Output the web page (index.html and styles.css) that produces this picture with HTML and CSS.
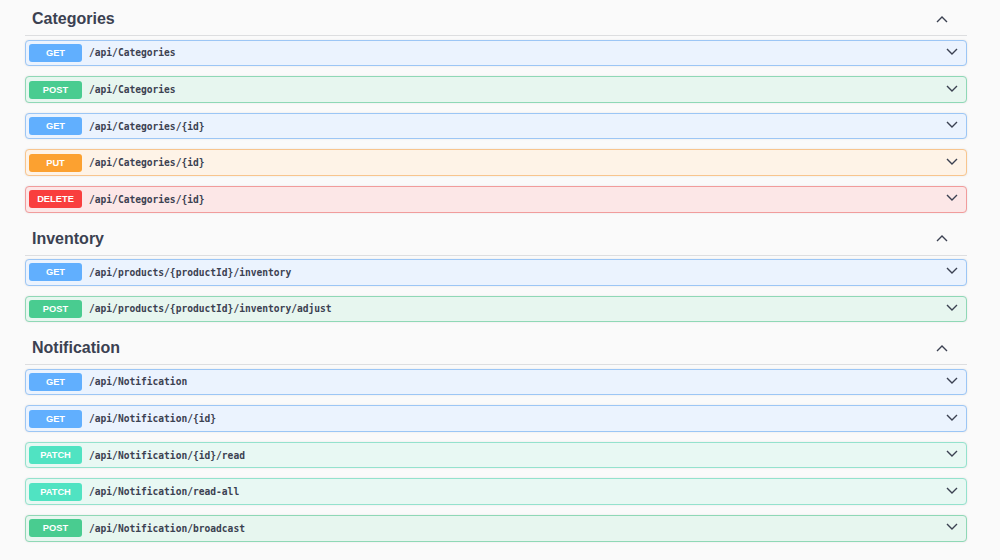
FILE: index.html
```html
<html>

<head>
  <title>API</title>

  <link rel="stylesheet" href="styles.css">
</head>

<body>
  <div class="wrapper">

    <div class="tag">
      <div class="tag-title">
        <span>Categories</span>
        <svg class="arrow" width="12" height="7" viewBox="0 0 12 7"><polyline points="1,6 6,1 11,6"></polyline></svg>
      </div>
      <div class="op get">
        <span class="method">GET</span>
        <span class="path">/api/Categories</span>
        <svg class="arrow down" width="12" height="7" viewBox="0 0 12 7"><polyline points="1,1 6,6 11,1"></polyline></svg>
      </div>
      <div class="op post">
        <span class="method">POST</span>
        <span class="path">/api/Categories</span>
        <svg class="arrow down" width="12" height="7" viewBox="0 0 12 7"><polyline points="1,1 6,6 11,1"></polyline></svg>
      </div>
      <div class="op get">
        <span class="method">GET</span>
        <span class="path">/api/Categories/{id}</span>
        <svg class="arrow down" width="12" height="7" viewBox="0 0 12 7"><polyline points="1,1 6,6 11,1"></polyline></svg>
      </div>
      <div class="op put">
        <span class="method">PUT</span>
        <span class="path">/api/Categories/{id}</span>
        <svg class="arrow down" width="12" height="7" viewBox="0 0 12 7"><polyline points="1,1 6,6 11,1"></polyline></svg>
      </div>
      <div class="op delete">
        <span class="method">DELETE</span>
        <span class="path">/api/Categories/{id}</span>
        <svg class="arrow down" width="12" height="7" viewBox="0 0 12 7"><polyline points="1,1 6,6 11,1"></polyline></svg>
      </div>
    </div>

    <div class="tag">
      <div class="tag-title">
        <span>Inventory</span>
        <svg class="arrow" width="12" height="7" viewBox="0 0 12 7"><polyline points="1,6 6,1 11,6"></polyline></svg>
      </div>
      <div class="op get">
        <span class="method">GET</span>
        <span class="path">/api/products/{productId}/inventory</span>
        <svg class="arrow down" width="12" height="7" viewBox="0 0 12 7"><polyline points="1,1 6,6 11,1"></polyline></svg>
      </div>
      <div class="op post">
        <span class="method">POST</span>
        <span class="path">/api/products/{productId}/inventory/adjust</span>
        <svg class="arrow down" width="12" height="7" viewBox="0 0 12 7"><polyline points="1,1 6,6 11,1"></polyline></svg>
      </div>
    </div>

    <div class="tag">
      <div class="tag-title">
        <span>Notification</span>
        <svg class="arrow" width="12" height="7" viewBox="0 0 12 7"><polyline points="1,6 6,1 11,6"></polyline></svg>
      </div>
      <div class="op get">
        <span class="method">GET</span>
        <span class="path">/api/Notification</span>
        <svg class="arrow down" width="12" height="7" viewBox="0 0 12 7"><polyline points="1,1 6,6 11,1"></polyline></svg>
      </div>
      <div class="op get">
        <span class="method">GET</span>
        <span class="path">/api/Notification/{id}</span>
        <svg class="arrow down" width="12" height="7" viewBox="0 0 12 7"><polyline points="1,1 6,6 11,1"></polyline></svg>
      </div>
      <div class="op patch">
        <span class="method">PATCH</span>
        <span class="path">/api/Notification/{id}/read</span>
        <svg class="arrow down" width="12" height="7" viewBox="0 0 12 7"><polyline points="1,1 6,6 11,1"></polyline></svg>
      </div>
      <div class="op patch">
        <span class="method">PATCH</span>
        <span class="path">/api/Notification/read-all</span>
        <svg class="arrow down" width="12" height="7" viewBox="0 0 12 7"><polyline points="1,1 6,6 11,1"></polyline></svg>
      </div>
      <div class="op post">
        <span class="method">POST</span>
        <span class="path">/api/Notification/broadcast</span>
        <svg class="arrow down" width="12" height="7" viewBox="0 0 12 7"><polyline points="1,1 6,6 11,1"></polyline></svg>
      </div>
    </div>

  </div>
</body>

</html>
```

FILE: styles.css
```css
body {
  margin: 0;
  background-color: #fafafa;
  font-family: "Liberation Sans", Arial, sans-serif;
  color: #3b4151;
}

.wrapper {
  width: 942px;
  padding: 3.3px 0 0 25px;
}

.tag-title {
  display: flex;
  align-items: center;
  justify-content: space-between;
  height: 32px;
  padding: 0 19px 0 7px;
  border-bottom: 1px solid rgba(59, 65, 81, 0.15);
  margin-bottom: 3.4px;
  font-size: 16px;
  font-weight: bold;
}

.arrow {
  fill: none;
  stroke: #3b4151;
  stroke-width: 1.4;
}

.arrow.down {
  margin-left: auto;
  margin-right: 8px;
  margin-bottom: 3px;
}

.op {
  display: flex;
  align-items: center;
  box-sizing: border-box;
  height: 26.6px;
  margin-bottom: 10px;
  padding: 0 0 0 3px;
  border: 1px solid;
  border-radius: 4px;
  box-shadow: 0 0 2px rgba(0, 0, 0, 0.1);
}

.method {
  width: 53px;
  height: 18px;
  line-height: 18px;
  border-radius: 3px;
  text-align: center;
  color: white;
  font-size: 9.3px;
  font-weight: bold;
}

.path {
  margin-left: 7px;
  font-family: "DejaVu Sans Mono", "Liberation Mono", monospace;
  font-size: 9.6px;
  font-weight: bold;
  color: #3b4151;
}

.get {
  background-color: #ebf3fe;
  border-color: #9cc6f5;
}

.get>.method {
  background-color: #61affe;
}

.post {
  background-color: #e7f6ef;
  border-color: #8fd8b6;
}

.post>.method {
  background-color: #49cc90;
}

.put {
  background-color: #fef3e7;
  border-color: #f8c58e;
}

.put>.method {
  background-color: #fca130;
}

.delete {
  background-color: #fce7e7;
  border-color: #f19c9c;
}

.delete>.method {
  background-color: #f93e3e;
}

.patch {
  background-color: #e8f8f3;
  border-color: #94e2cd;
}

.patch>.method {
  background-color: #50e3c2;
}
```
